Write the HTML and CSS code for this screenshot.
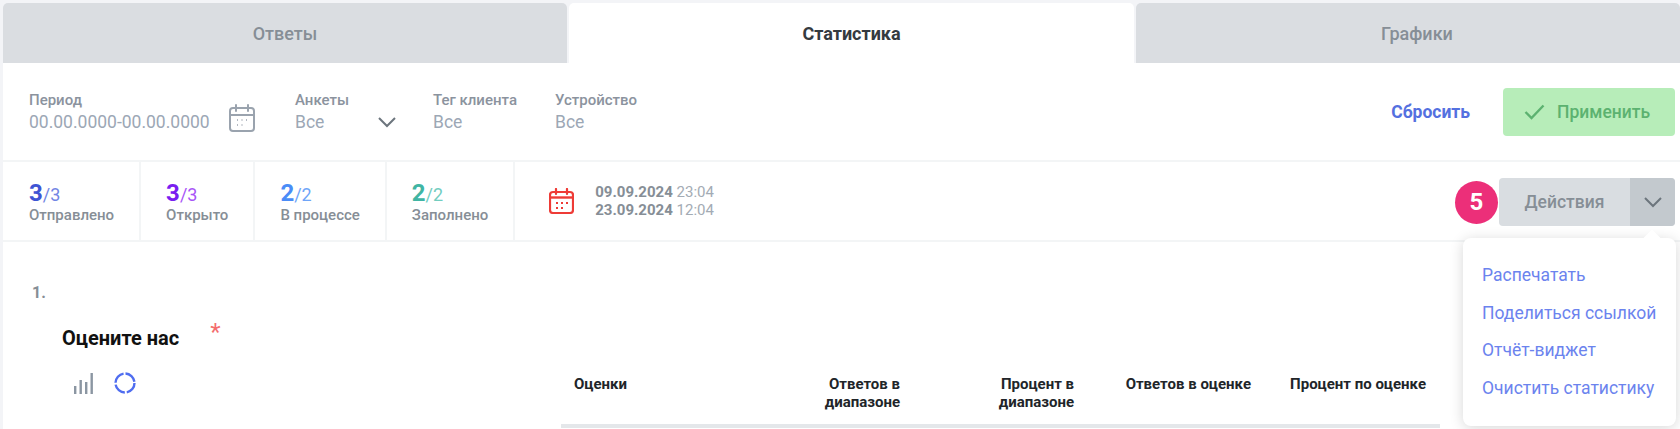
FILE: index.html
```html
<!DOCTYPE html>
<html lang="ru">
<head>
    <meta charset="UTF-8">
    <meta name="viewport" content="width=device-width, initial-scale=1.0">
    <title>Статистика</title>
    <link rel="stylesheet" href="styles.css">
</head>
<body>
    <div class="page">
        <!-- Tabs -->
        <div class="tabs">
            <div class="tab tab-answers">Ответы</div>
            <div class="tab tab-active">Статистика</div>
            <div class="tab tab-charts">Графики</div>
        </div>

        <!-- Filters -->
        <div class="filters">
            <div class="filter filter-period">
                <div class="filter-label">Период</div>
                <div class="filter-value">
                    <span>00.00.0000-00.00.0000</span>
                    <svg class="icon-calendar" viewBox="0 0 26 28" fill="none" stroke="#9aa3ae" stroke-width="2">
                        <rect x="1" y="4" width="24" height="23" rx="3"/>
                        <path d="M1 11h24M7 1v6M19 1v6" stroke-linecap="round"/>
                        <path d="M8 16h1M12.500 16h1M17 16h1M8 21h1M12.500 21h1" stroke-width="1.600"/>
                    </svg>
                </div>
            </div>
            <div class="filter filter-forms">
                <div class="filter-label">Анкеты</div>
                <div class="filter-value">
                    <span>Все</span>
                    <svg class="icon-chevron" viewBox="0 0 18 11" fill="none" stroke="#6c757d" stroke-width="2">
                        <path d="M1 1l8 8 8-8"/>
                    </svg>
                </div>
            </div>
            <div class="filter filter-tag">
                <div class="filter-label">Тег клиента</div>
                <div class="filter-value">Все</div>
            </div>
            <div class="filter">
                <div class="filter-label">Устройство</div>
                <div class="filter-value">Все</div>
            </div>
            <div class="filter-actions">
                <a class="reset-link">Сбросить</a>
                <button class="apply-btn">
                    <svg class="icon-check" viewBox="0 0 21 16" fill="none" stroke="#5cb270" stroke-width="2.400">
                        <path d="M1.500 8l6 6L19.500 1.500"/>
                    </svg>
                    Применить
                </button>
            </div>
        </div>

        <!-- Stats row -->
        <div class="stats">
            <div class="stat">
                <div class="stat-count count-sent"><b>3</b>/3</div>
                <div class="stat-label">Отправлено</div>
            </div>
            <div class="stat">
                <div class="stat-count count-opened"><b>3</b>/3</div>
                <div class="stat-label">Открыто</div>
            </div>
            <div class="stat">
                <div class="stat-count count-progress"><b>2</b>/2</div>
                <div class="stat-label">В процессе</div>
            </div>
            <div class="stat">
                <div class="stat-count count-filled"><b>2</b>/2</div>
                <div class="stat-label">Заполнено</div>
            </div>
            <div class="dates">
                <svg class="icon-date" viewBox="0 0 25 26" fill="none" stroke="#ee3b36" stroke-width="2.200">
                    <rect x="1" y="4" width="23" height="21" rx="3"/>
                    <path d="M1 9.500h23" stroke-width="2.400"/>
                    <path d="M7 1v5M18 1v5" stroke-linecap="round"/>
                    <path d="M7 15h2M12 15h2M17 15h2M7 20h2M12 20h2" stroke-width="2"/>
                </svg>
                <div class="dates-text">
                    <div><b>09.09.2024</b> 23:04</div>
                    <div><b>23.09.2024</b> 12:04</div>
                </div>
            </div>
            <div class="actions">
                <div class="step-badge">5</div>
                <div class="actions-btn">
                    <span class="actions-title">Действия</span>
                    <span class="actions-toggle">
                        <svg class="icon-chevron" viewBox="0 0 18 11" fill="none" stroke="#6c757d" stroke-width="2">
                            <path d="M1 1l8 8 8-8"/>
                        </svg>
                    </span>
                </div>
                <!-- Open dropdown -->
                <div class="actions-menu">
                    <a>Распечатать</a>
                    <a>Поделиться ссылкой</a>
                    <a>Отчёт-виджет</a>
                    <a>Очистить статистику</a>
                </div>
            </div>
        </div>

        <!-- Question -->
        <div class="question">
            <div class="question-info">
                <div class="question-number">1.</div>
                <div class="question-title">Оцените нас<span class="required">*</span></div>
                <div class="question-views">
                    <svg class="icon-bars" viewBox="0 0 19 21" fill="#8b96a2">
                        <rect x="0" y="13" width="2.400" height="8"/>
                        <rect x="5.500" y="7" width="2.400" height="14"/>
                        <rect x="11" y="9" width="2.400" height="12"/>
                        <rect x="16.500" y="0" width="2.400" height="21"/>
                    </svg>
                    <svg class="icon-donut" viewBox="0 0 22 22" fill="none" stroke="#4f6df0" stroke-width="2.400">
                        <circle cx="11" cy="11" r="9.500" stroke-dasharray="13 2"/>
                    </svg>
                </div>
            </div>
            <div class="answers-table">
                <div class="answers-head">
                    <div class="col-first">Оценки</div>
                    <div>Ответов в<br>диапазоне</div>
                    <div>Процент в<br>диапазоне</div>
                    <div>Ответов в оценке</div>
                    <div>Процент по оценке</div>
                </div>
            </div>
        </div>
    </div>
</body>
</html>
```

FILE: styles.css
```css
* {
    box-sizing: border-box;
}

html, body {
    height: 100%;
}

body {
    margin: 0;
    overflow: hidden;
    background-color: #f3f4f7;
    font-family: Roboto, "Liberation Sans", sans-serif;
}

.page {
    margin-left: 3px;
    padding-top: 3px;
    height: 429px;
    overflow: hidden;
}

.tabs {
    display: flex;
    height: 60px;
}

.tab {
    display: flex;
    align-items: center;
    justify-content: center;
    background-color: #dadde1;
    color: #868e96;
    font-size: 18px;
    font-weight: 500;
    border-radius: 5px 5px 0 0;
}

.tab-answers {
    width: 564px;
}

.tab-active {
    width: 565px;
    margin: 0 2px 0 2px;
    background-color: white;
    color: #343a40;
    font-weight: 700;
}

.tab-charts {
    flex: 1;
    padding-left: 18px;
}

.filters {
    display: flex;
    align-items: flex-start;
    height: 99px;
    padding: 28px 5px 0 26px;
    background-color: white;
    border-bottom: 2px solid #f3f5f6;
}

.filter-period {
    width: 266px;
}

.filter-forms {
    width: 138px;
}

.filter-tag {
    width: 122px;
}

.filter-label {
    color: #8b939e;
    font-size: 15px;
    font-weight: 500;
    line-height: 18px;
}

.filter-value {
    display: flex;
    align-items: center;
    justify-content: space-between;
    height: 26px;
    color: #9ca7b5;
    font-size: 17.500px;
}

.filter-period .filter-value {
    width: 226px;
}

.filter-forms .filter-value {
    width: 101px;
}

.icon-calendar {
    width: 26px;
    height: 28px;
    margin-top: -9px;
}

.icon-chevron {
    width: 18px;
    height: 11px;
}

.filter-actions {
    display: flex;
    align-items: center;
    margin-left: auto;
    margin-top: -3px;
}

.reset-link {
    margin-right: 33px;
    color: #5470e0;
    font-size: 17.500px;
    font-weight: 700;
}

.apply-btn {
    display: flex;
    align-items: center;
    gap: 12px;
    width: 172px;
    height: 48px;
    padding: 0 0 0 21px;
    border: none;
    border-radius: 4px;
    background-color: #b7edb9;
    color: #5cb270;
    font-family: inherit;
    font-size: 17.500px;
    font-weight: 500;
}

.icon-check {
    width: 21px;
    height: 16px;
}

.stats {
    display: flex;
    height: 80px;
    background-color: white;
    border-bottom: 2px solid #f3f5f6;
}

.stat {
    padding: 18px 25px 0;
    border-right: 2px solid #f3f5f6;
}

.stat:first-child {
    padding-left: 26px;
}

.stat-count {
    height: 26px;
    font-size: 18px;
    line-height: 26px;
}

.stat-count b {
    font-size: 24px;
    font-weight: 700;
}

.stat-label {
    color: #868e96;
    font-size: 15px;
    font-weight: 500;
    line-height: 18px;
}

.count-sent {
    color: #7285e4;
}

.count-sent b {
    color: #3f54d4;
}

.count-opened {
    color: #a855f7;
}

.count-opened b {
    color: #7a1ef0;
}

.count-progress {
    color: #6fa5f8;
}

.count-progress b {
    color: #4a8cf7;
}

.count-filled {
    color: #72cdbf;
}

.count-filled b {
    color: #40b5a3;
}

.dates {
    display: flex;
    align-items: center;
    gap: 21px;
    padding-left: 34px;
}

.icon-date {
    width: 25px;
    height: 26px;
}

.dates-text {
    color: #a3abb4;
    font-size: 15px;
    line-height: 18px;
}

.dates-text b {
    color: #868e96;
    font-weight: 700;
}

.actions {
    position: relative;
    display: flex;
    align-items: center;
    height: 48px;
    margin: 16px 5px 0 auto;
}

.step-badge {
    display: flex;
    align-items: center;
    justify-content: center;
    width: 43px;
    height: 43px;
    margin-right: 1px;
    border-radius: 50%;
    background-color: #ec2f79;
    color: white;
    font-size: 24px;
    font-weight: 700;
}

.actions-btn {
    display: flex;
    width: 176px;
    height: 48px;
    border-radius: 4px;
    overflow: hidden;
    background-color: #d9dde1;
}

.actions-title {
    display: flex;
    align-items: center;
    justify-content: center;
    flex: 1;
    color: #868e96;
    font-size: 17.500px;
    font-weight: 500;
}

.actions-toggle {
    display: flex;
    align-items: center;
    justify-content: center;
    width: 45px;
    background-color: #c3c9ce;
}

.actions-menu {
    position: absolute;
    z-index: 2;
    top: 60px;
    right: -1px;
    display: flex;
    flex-direction: column;
    gap: 17.700px;
    width: 213px;
    height: 188px;
    padding: 27px 0 0 19px;
    border-radius: 8px;
    background-color: white;
    box-shadow: 0 2px 14px rgba(0, 0, 0, 0.16);
    color: #6b83ee;
    font-size: 17.500px;
    line-height: 20px;
}

.actions-menu::before {
    content: "";
    position: absolute;
    top: -6px;
    right: 18px;
    width: 12px;
    height: 12px;
    background-color: white;
    transform: rotate(45deg);
}

.question {
    display: flex;
    background-color: white;
    height: 187px;
}

.question-info {
    width: 558px;
    padding: 42px 0 0 29px;
}

.question-number {
    color: #868e96;
    font-size: 16px;
    font-weight: 700;
    line-height: 18px;
}

.question-title {
    display: flex;
    align-items: flex-start;
    margin: 24px 0 0 30px;
    color: #111;
    font-size: 20px;
    font-weight: 700;
    line-height: 24px;
}

.required {
    margin: -6px 0 0 31px;
    color: #f46d6d;
    font-size: 24px;
    font-weight: 400;
}

.question-views {
    display: flex;
    align-items: center;
    gap: 21px;
    margin: 22px 0 0 42px;
}

.icon-bars {
    width: 19px;
    height: 21px;
}

.icon-donut {
    width: 22px;
    height: 22px;
}

.answers-table {
    width: 879px;
    padding-top: 133px;
}

.answers-head {
    display: grid;
    grid-template-columns: 206px 120px 174px 177px 175px;
    height: 53px;
    padding-left: 13px;
    border-bottom: 4px solid #e4e7ea;
    color: #212529;
    font-size: 15px;
    font-weight: 700;
    line-height: 18px;
    text-align: right;
}

.answers-head .col-first {
    text-align: left;
}
```
